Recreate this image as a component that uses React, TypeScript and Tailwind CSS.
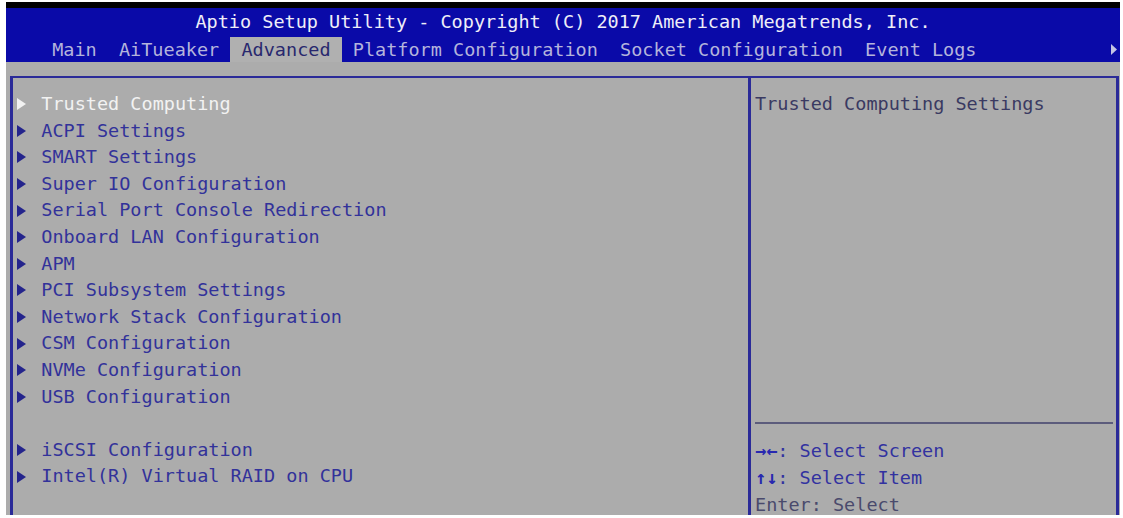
const tabs = [
  "Main",
  "AiTueaker",
  "Advanced",
  "Platform Configuration",
  "Socket Configuration",
  "Event Logs",
]

const activeTab = "Advanced"

// null leaves an empty line between menu groups
const items: (string | null)[] = [
  "Trusted Computing",
  "ACPI Settings",
  "SMART Settings",
  "Super IO Configuration",
  "Serial Port Console Redirection",
  "Onboard LAN Configuration",
  "APM",
  "PCI Subsystem Settings",
  "Network Stack Configuration",
  "CSM Configuration",
  "NVMe Configuration",
  "USB Configuration",
  null,
  "iSCSI Configuration",
  "Intel(R) Virtual RAID on CPU",
]

const selected = "Trusted Computing"

function Pointer({ color }: { color: string }) {
  return (
    <span className="inline-flex w-[1ch] items-center justify-start">
      <svg width="9" height="12" viewBox="0 0 9 12" className="-ml-[2px]">
        <path d="M0 0 L9 6 L0 12 Z" fill={color} />
      </svg>
    </span>
  )
}

export default function App() {
  return (
    <div className="h-[518px] w-[1123px] overflow-hidden bg-white pl-[6px] pr-[3px] pt-[2px] [font-family:'DejaVu_Sans_Mono','Liberation_Mono',monospace] text-[18.5px]">
      <div className="flex h-[513px] flex-col">
        <div className="h-[6px] bg-black" />

        <header className="flex h-[54px] flex-col bg-[#0a0aa8]">
          <div className="pt-[4px] text-center leading-[20px] text-[#eeeef8] whitespace-pre">
            Aptio Setup Utility - Copyright (C) 2017 American Megatrends, Inc.
          </div>
          <nav className="mt-[5px] flex h-[25px] items-stretch pl-[35px] pr-[3px]">
            {tabs.map((t) => (
              <span
                key={t}
                className={
                  t === activeTab
                    ? "whitespace-pre bg-[#b0b0b0] px-[1ch] leading-[25px] text-[#28286e]"
                    : "whitespace-pre px-[1ch] leading-[25px] text-[#b4b4dc]"
                }
              >
                {t}
              </span>
            ))}
            <span className="ml-auto flex items-center">
              <svg width="6" height="11" viewBox="0 0 6 11">
                <path d="M0 0 L6 5.5 L0 11 Z" fill="#c4c4e4" />
              </svg>
            </span>
          </nav>
        </header>

        <main className="flex-1 overflow-hidden bg-[#acacac] pl-[4px] pt-[14px]">
          <div className="flex h-[480px] w-[1109px] border-l-[3px] border-r-[3px] border-t-[2px] border-[#2a2a98]">
            <section className="w-[735px] pl-[6px] pt-[13px] leading-[26.6px]">
              {items.map((item, i) =>
                item === null ? (
                  <div key={i} className="h-[26.6px]" />
                ) : (
                  <div
                    key={item}
                    className={
                      item === selected
                        ? "flex whitespace-pre text-[#f2f2f2]"
                        : "flex whitespace-pre text-[#32329a]"
                    }
                  >
                    <Pointer color={item === selected ? "#f2f2f2" : "#24248c"} />
                    <span className="w-[1ch]" />
                    <span>{item}</span>
                  </div>
                ),
              )}
            </section>

            <aside className="flex flex-1 flex-col border-l-[3px] border-[#2a2a98]">
              <div className="h-[344px] pl-[4px] pt-[13px] leading-[26.6px] text-[#3a3a62]">
                Trusted Computing Settings
              </div>
              <div className="ml-[4px] mr-[3px] h-[2px] bg-[#5c5c7c]" />
              <div className="pl-[4px] pt-[13px] leading-[27px] whitespace-pre">
                <div className="text-[#3232a0]">
                  <span className="font-bold text-[#2828b0]">→←</span>: Select Screen
                </div>
                <div className="text-[#3232a0]">
                  <span className="font-bold text-[#2828b0]">↑↓</span>: Select Item
                </div>
                <div className="text-[#4a4a6c]">Enter: Select</div>
              </div>
            </aside>
          </div>
        </main>
      </div>
    </div>
  )
}
